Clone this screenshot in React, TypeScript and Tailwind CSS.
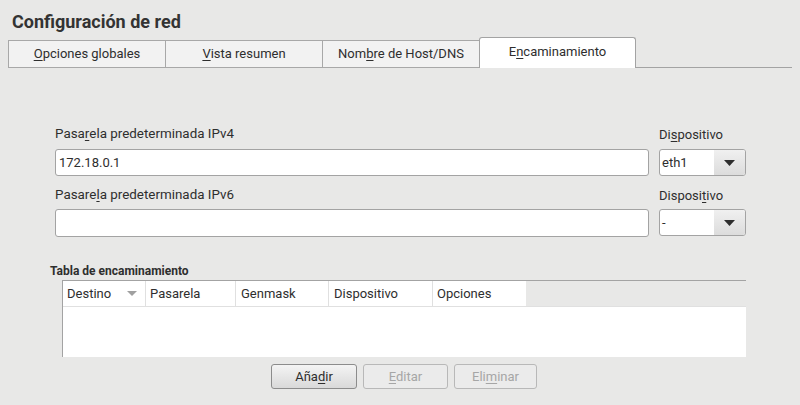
import React from "react";

const font = { fontFamily: "Roboto, 'Noto Sans', sans-serif" };

function U({ children }: { children: React.ReactNode }) {
  return <span className="underline underline-offset-2">{children}</span>;
}

function Tab({ children, active }: { children: React.ReactNode; active?: boolean }) {
  if (active) {
    return (
      <div className="-ml-px flex h-[31px] w-[157px] items-center justify-center rounded-t-[3px] border border-b-0 border-[#a3a3a3] bg-white pb-[2px]">
        {children}
      </div>
    );
  }
  return (
    <div className="-ml-px flex h-[28px] w-[158px] items-center justify-center border border-[#a8a8a8] bg-[#f2f2f2] first:ml-0">
      {children}
    </div>
  );
}

function Combo({ value }: { value: string }) {
  return (
    <div className="flex h-[27px] w-[87px] overflow-hidden rounded-[3px] border border-[#a3a3a3] bg-white">
      <div className="flex flex-1 items-center pl-[2px]">{value}</div>
      <div className="flex w-[31px] items-center justify-center bg-gradient-to-b from-[#f0f0f0] to-[#dcdcdc]">
        <svg width="11" height="6" viewBox="0 0 11 6">
          <path d="M0 0h11L5.5 6z" fill="#2e2e2e" />
        </svg>
      </div>
    </div>
  );
}

function Btn({ children, disabled }: { children: React.ReactNode; disabled?: boolean }) {
  return (
    <div
      className={
        disabled
          ? "flex h-[25px] items-center justify-center rounded-[3px] border border-[#b8b8b8] bg-[#ebebeb] text-[#a6a6a6]"
          : "flex h-[25px] items-center justify-center rounded-[3px] border border-[#8c8c8c] bg-gradient-to-b from-[#f4f4f4] to-[#d9d9d9] text-[#2e2e2e]"
      }
    >
      {children}
    </div>
  );
}

export default function App() {
  return (
    <div className="h-[405px] w-[800px] overflow-hidden bg-[#e8e8e7] text-[13px] leading-4 text-[#2e2e2e]" style={font}>
      <h1 className="px-3 pt-[11px] text-[18px] font-bold leading-[22px] text-[#333]">Configuración de red</h1>

      <div className="mt-[4px] flex items-end pl-2 pr-2">
        <Tab>
          <span><U>O</U>pciones globales</span>
        </Tab>
        <Tab>
          <span><U>V</U>ista resumen</span>
        </Tab>
        <Tab>
          <span>Nom<U>b</U>re de Host/DNS</span>
        </Tab>
        <Tab active>
          <span>E<U>n</U>caminamiento</span>
        </Tab>
        <div className="h-px flex-1 bg-[#a3a3a3]" />
      </div>

      <div className="grid grid-cols-[594px_87px] gap-x-[10px] pl-[55px] pt-[58px]">
        <label className="mb-[6px] text-[13.4px]">Pasa<U>r</U>ela predeterminada IPv4</label>
        <label className="mb-[6px] mt-px">Di<U>s</U>positivo</label>
        <div className="flex h-[27px] items-center rounded-[3px] border border-[#a3a3a3] bg-white pl-[3px]">172.18.0.1</div>
        <Combo value="eth1" />
        <label className="mb-[5px] mt-[11px] text-[13.4px]">Pasare<U>l</U>a predeterminada IPv6</label>
        <label className="mb-[5px] mt-[12px]">Disposi<U>t</U>ivo</label>
        <div className="h-[28px] rounded-[3px] border border-[#a3a3a3] bg-white" />
        <Combo value="-" />
      </div>

      <div className="pl-[50px] pt-[26px] text-[12px] font-bold leading-4">Tabla de encaminamiento</div>
      <div className="ml-[62px] mt-[1px] h-[77px] w-[684px] border-l border-t border-[#a3a3a3] bg-white">
        <div className="flex h-[26px] border-b border-[#e0e0e0]">
          <div className="flex w-[83px] items-center justify-between border-r border-[#e0e0e0] pl-[4px] pr-[8px]">
            <span>Destino</span>
            <svg width="10" height="5" viewBox="0 0 10 5">
              <path d="M0 0h10L5 5z" fill="#a0a0a0" />
            </svg>
          </div>
          <div className="flex w-[90px] items-center border-r border-[#e0e0e0] pl-[4px]">Pasarela</div>
          <div className="flex w-[93px] items-center border-r border-[#e0e0e0] pl-[5px]">Genmask</div>
          <div className="flex w-[104px] items-center border-r border-[#e0e0e0] pl-[5px]">Dispositivo</div>
          <div className="flex w-[93px] items-center pl-[4px]">Opciones</div>
          <div className="flex-1 bg-[#e8e8e7]" />
        </div>
      </div>

      <div className="ml-[271px] mt-[7px] flex gap-[6px]">
        <div className="w-[86px]">
          <Btn>
            <span>Aña<U>d</U>ir</span>
          </Btn>
        </div>
        <div className="w-[85px]">
          <Btn disabled>
            <span><U>E</U>ditar</span>
          </Btn>
        </div>
        <div className="w-[83px]">
          <Btn disabled>
            <span>Eli<U>m</U>inar</span>
          </Btn>
        </div>
      </div>
    </div>
  );
}
